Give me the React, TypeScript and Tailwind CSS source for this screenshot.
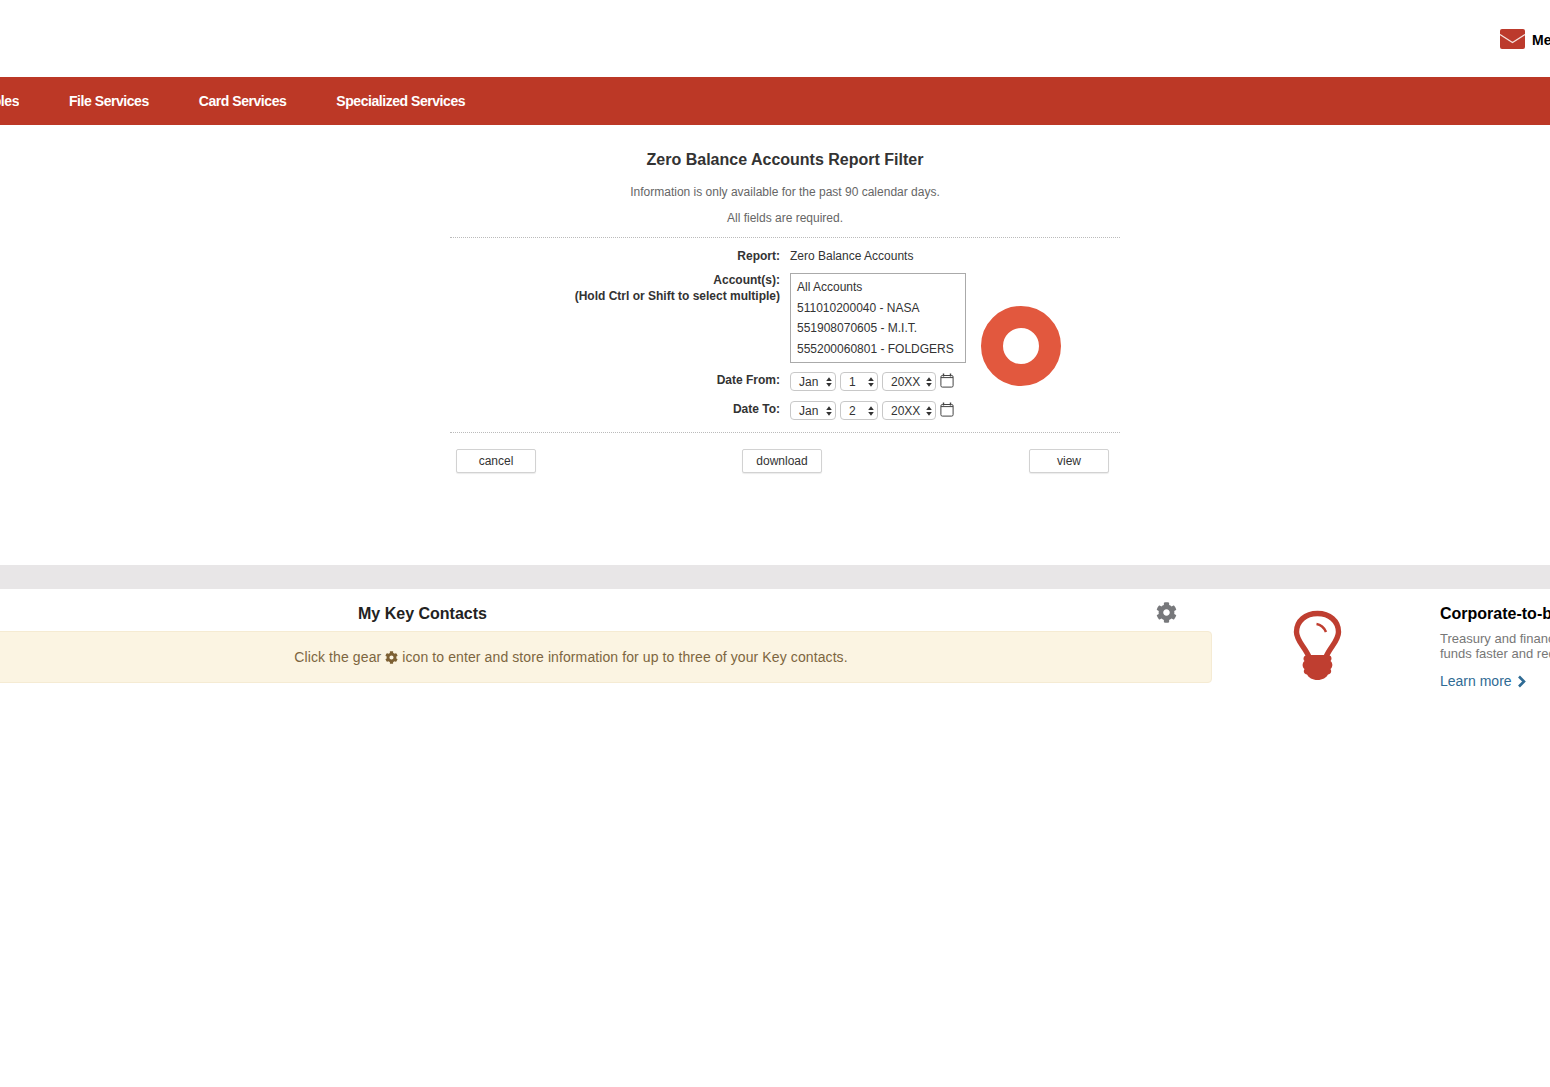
import React from 'react';
import { FaCog } from 'react-icons/fa';

const Envelope = () => (
  <svg width="25" height="20" viewBox="0 0 25 20" className="block shrink-0">
    <rect x="0" y="0" width="25" height="20" rx="2" fill="#bc3a2c" />
    <path d="M0 5.5 L12.5 13.5 L25 5.5" fill="none" stroke="#f7e3df" strokeWidth="1.2" />
  </svg>
);

const Calendar = () => (
  <svg width="14" height="15" viewBox="0 0 14 15" className="-mt-[2px] block shrink-0">
    <rect x="0.9" y="2.5" width="12.2" height="11.6" rx="1.4" fill="none" stroke="#444" strokeWidth="1" />
    <path d="M1 4.6 H13" stroke="#444" strokeWidth="1" />
    <path d="M3.5 0.6 V3.5 M10.5 0.6 V3.5" stroke="#444" strokeWidth="1.4" />
  </svg>
);

const Bulb = () => (
  <svg width="49" height="70" viewBox="0 0 49 70" className="block">
    <path
      d="M16 47 C12 37 3.5 31 3.5 22 C3.5 11 12.5 3.5 24.5 3.5 C36.5 3.5 45.5 11 45.5 22 C45.5 31 37 37 33 47"
      fill="none"
      stroke="#bf3e30"
      strokeWidth="5.4"
    />
    <path d="M23.5 14 C27.5 14.5 31 17.5 33 22" fill="none" stroke="#bf3e30" strokeWidth="2.6" />
    <path
      d="M15 45 H35 C38.5 45 39.5 49 37.5 51 C40 53 40 57 37.5 59 C39 61.5 38 64 35 64.5 C33.5 67.5 29.5 70 24.5 70 C19.5 70 15.5 67.5 14 64.5 C11 64 10 61.5 11.5 59 C9 57 9 53 11.5 51 C9.5 49 10.5 45 15 45 Z"
      fill="#bf3e30"
    />
  </svg>
);

const Spin = () => (
  <svg width="6" height="10" viewBox="0 0 6 10" className="block shrink-0">
    <path d="M3 0.2 L5.8 4 H0.2 Z M3 9.8 L5.8 6 H0.2 Z" fill="#333" />
  </svg>
);

const Pick = ({ value, w }: { value: string; w: string }) => (
  <div className={`flex h-[19px] items-center justify-between rounded-[4px] border border-[#c8c8c8] bg-white pl-[8px] pr-[3px] text-[12px] text-[#333] ${w}`}>
    <span>{value}</span>
    <Spin />
  </div>
);

const DateRow = ({ label, day }: { label: string; day: string }) => (
  <div className="flex">
    <div className="w-[330px] pt-[1px] text-right text-[12px] font-bold leading-[14px] text-[#333]">{label}</div>
    <div className="ml-[10px] flex items-center gap-[4px]">
      <Pick value="Jan" w="w-[46px]" />
      <Pick value={day} w="w-[38px]" />
      <Pick value="20XX" w="w-[54px]" />
      <Calendar />
    </div>
  </div>
);

const Btn = ({ children }: { children: React.ReactNode }) => (
  <button className="block h-[24px] w-[80px] rounded-[2px] border border-[#d2d2d2] bg-white text-[12px] text-[#333] shadow-[0_1px_1px_rgba(0,0,0,0.08)]">
    {children}
  </button>
);

export default function App() {
  return (
    <div className="h-[1087px] w-[1550px] overflow-hidden bg-white font-['Liberation_Sans',Arial,sans-serif]">
      {/* top strip, the label runs off the right edge */}
      <div className="flex h-[77px] items-start overflow-hidden pl-[1500px] pt-[29px]">
        <Envelope />
        <span className="ml-[7px] whitespace-nowrap text-[14px] font-bold leading-[22px] text-black">Messages</span>
      </div>

      <div className="flex h-[48px] items-center gap-[50px] bg-[#bc3826] text-[14px] font-bold tracking-[-0.45px] text-white">
        <div className="flex w-[19px] justify-end overflow-hidden whitespace-nowrap">Payables</div>
        <span>File Services</span>
        <span>Card Services</span>
        <span>Specialized Services</span>
      </div>

      <div className="relative ml-[450px] h-[440px] w-[670px]">
        <h1 className="pt-[26px] text-center text-[16px] font-bold leading-[18px] text-[#333]">Zero Balance Accounts Report Filter</h1>
        <p className="mt-[15px] text-center text-[12px] leading-[16px] text-[#666]">Information is only available for the past 90 calendar days.</p>
        <p className="mt-[10px] text-center text-[12px] leading-[16px] text-[#666]">All fields are required.</p>

        <div className="mt-[11px] border-t border-dotted border-[#bbb] pt-[11px]">
          <div className="flex text-[12px] leading-[14px]">
            <div className="w-[330px] text-right font-bold text-[#333]">Report:</div>
            <div className="ml-[10px] text-[#333]">Zero Balance Accounts</div>
          </div>

          <div className="mt-[10px] flex">
            <div className="-mt-[1px] w-[330px] text-right text-[12px] font-bold leading-[16px] text-[#333]">
              Account(s):
              <br />
              (Hold Ctrl or Shift to select multiple)
            </div>
            <div className="ml-[10px] h-[90px] w-[176px] border border-[#aaa] pl-[6px] pt-[3px] text-[12px] leading-[20.6px] text-[#333]">
              <div>All Accounts</div>
              <div>511010200040 - NASA</div>
              <div>551908070605 - M.I.T.</div>
              <div>555200060801 - FOLDGERS</div>
            </div>
          </div>

          <div className="mt-[9px]">
            <DateRow label="Date From:" day="1" />
          </div>
          <div className="mt-[10px]">
            <DateRow label="Date To:" day="2" />
          </div>
        </div>

        <div className="mt-[12px] border-t border-dotted border-[#bbb] pl-[6px] pr-[11px] pt-[16px]">
          <div className="flex justify-between">
            <Btn>cancel</Btn>
            <div className="-ml-[1px]">
              <Btn>download</Btn>
            </div>
            <Btn>view</Btn>
          </div>
        </div>

        {/* busy spinner sitting over the form */}
        <div className="absolute left-[531px] top-[181px] h-[80px] w-[80px] rounded-full border-[22px] border-[#e2583e]" />
      </div>

      <div className="h-[24px] bg-[#e8e6e7]" />

      <div className="flex">
        <div className="w-[1212px] shrink-0">
          <div className="flex h-[42px] items-start pt-[13px]">
            <h2 className="ml-[358px] mt-[1px] text-[16px] font-bold leading-[22px] text-[#222]">My Key Contacts</h2>
            <FaCog className="ml-[669px] text-[21px] text-[#77787b]" />
          </div>
          <div className="ml-[-70px] flex h-[52px] items-center justify-center rounded-r-[4px] border border-[#f5ebd3] bg-[#fbf4e2] text-[14px] tracking-[0.1px] text-[#7d6640]">
            <span>Click the gear</span>
            <FaCog className="mx-[4px] text-[13px] text-[#7d6033]" />
            <span>icon to enter and store information for up to three of your Key contacts.</span>
          </div>
        </div>
        <div className="ml-[81px] mt-[21px] shrink-0">
          <Bulb />
        </div>
        <div className="ml-[98px] w-[300px] shrink-0 pt-[15px]">
          <div className="text-[16px] font-bold leading-[20px] text-black">Corporate-to-bank</div>
          <p className="mt-[7px] whitespace-nowrap text-[13px] leading-[15px] text-[#777]">
            Treasury and finance teams move
            <br />
            funds faster and reduce errors.
          </p>
          <div className="mt-[12px] flex items-center gap-[5px] text-[14px] leading-[16px] text-[#2f6b94]">
            Learn more
            <svg width="9" height="13" viewBox="0 0 9 13" className="block shrink-0">
              <path d="M2 1.5 L7 6.5 L2 11.5" fill="none" stroke="#2f6b94" strokeWidth="2.6" />
            </svg>
          </div>
        </div>
      </div>
    </div>
  );
}
